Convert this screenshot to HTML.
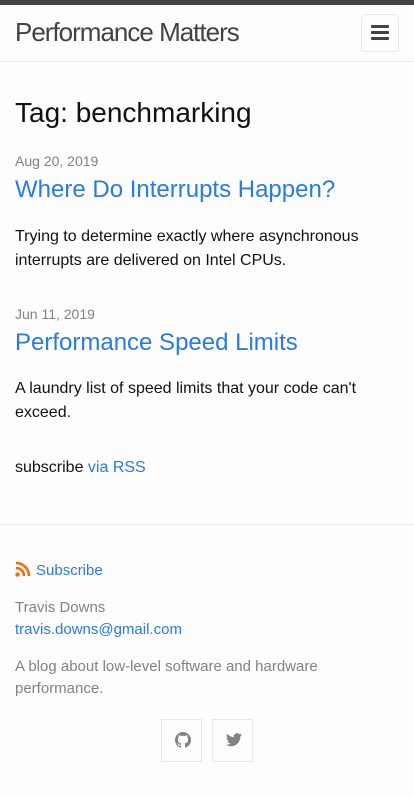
<!DOCTYPE html>
<html><head><meta charset="utf-8"><style>
body{margin:0;background:#fdfdfd;font-family:"Liberation Sans",sans-serif;color:#111;width:414px;height:797px;overflow:hidden;position:relative}
.a{position:absolute;white-space:nowrap}
a{color:#2a7ae2;text-decoration:none}
</style></head><body>
<div class="a" style="left:0;top:0;width:414px;height:5px;background:#424242"></div>
<div class="a" style="left:15px;top:17px;font-size:26px;color:#424242;letter-spacing:-1px">Performance Matters</div>
<div class="a" style="left:361px;top:14px;width:36px;height:36px;border:1px solid #e8e8e8;border-radius:4px;background:#fdfdfd"></div>
<div class="a" style="left:371px;top:25px;width:18px;height:3px;background:#424242;border-radius:1px"></div>
<div class="a" style="left:371px;top:31px;width:18px;height:3px;background:#424242;border-radius:1px"></div>
<div class="a" style="left:371px;top:37px;width:18px;height:3px;background:#424242;border-radius:1px"></div>
<div class="a" style="left:0;top:61px;width:414px;height:1px;background:#e8e8e8"></div>
<div class="a" style="left:15px;top:97px;font-size:28px">Tag: benchmarking</div>
<div class="a" style="left:15px;top:153px;font-size:14px;color:#828282">Aug 20, 2019</div>
<div class="a" style="left:15px;top:176px;font-size:24px"><a>Where Do Interrupts Happen?</a></div>
<div class="a" style="left:15px;top:225px;font-size:16px;line-height:24px;white-space:normal;width:380px">Trying to determine exactly where asynchronous interrupts are delivered on Intel CPUs.</div>
<div class="a" style="left:15px;top:306px;font-size:14px;color:#828282">Jun 11, 2019</div>
<div class="a" style="left:15px;top:329px;font-size:24px"><a>Performance Speed Limits</a></div>
<div class="a" style="left:15px;top:377px;font-size:16px;line-height:24px;white-space:normal;width:380px">A laundry list of speed limits that your code can't exceed.</div>
<div class="a" style="left:15px;top:459px;font-size:16px">subscribe <a>via RSS</a></div>
<div class="a" style="left:0;top:524px;width:414px;height:1px;background:#e8e8e8"></div>
<svg class="a" style="left:15px;top:561px" width="16" height="16" viewBox="0 0 16 16"><circle cx="2.5" cy="13.5" r="2.2" fill="#f26c0d"/><path d="M1 7a8 8 0 0 1 8 8M1 2a13 13 0 0 1 13 13" stroke="#f26c0d" stroke-width="2.6" fill="none"/></svg>
<div class="a" style="left:36px;top:562px;font-size:15px"><a>Subscribe</a></div>
<div class="a" style="left:15px;top:599px;font-size:15px;color:#828282">Travis Downs</div>
<div class="a" style="left:15px;top:621px;font-size:15px"><a>travis.downs@gmail.com</a></div>
<div class="a" style="left:15px;top:656px;font-size:15px;line-height:22px;color:#828282;white-space:normal;width:380px">A blog about low-level software and hardware performance.</div>
<div class="a" style="left:161px;top:719px;width:39px;height:41px;border:1px solid #e8e8e8"></div>
<div class="a" style="left:212px;top:719px;width:39px;height:41px;border:1px solid #e8e8e8"></div>
<svg class="a" style="left:175px;top:732px" width="16" height="16" viewBox="0 0 16 16"><path fill="#828282" d="M8 0C3.6 0 0 3.6 0 8c0 3.5 2.3 6.5 5.5 7.6.4.1.5-.2.5-.4v-1.4c-2.2.5-2.7-1-2.7-1-.4-.9-.9-1.2-.9-1.200-.7-.5.1-.5.1-.5.8.1 1.2.8 1.2.8.7 1.2 1.9.9 2.3.7.1-.5.3-.9.5-1.1-1.8-.2-3.600-.9-3.6-4 0-.9.3-1.6.8-2.1-.1-.2-.4-1 .1-2.1 0 0 .7-.2 2.2.8.6-.2 1.3-.3 2-.3s1.4.1 2 .3c1.5-1 2.2-.8 2.2-.8.4 1.1.2 1.9.1 2.1.5.6.8 1.3.8 2.1 0 3.1-1.9 3.7-3.6 3.9.3.3.5.8.5 1.5v2.2c0 .2.1.5.6.4C13.7 14.5 16 11.5 16 8c0-4.4-3.6-8-8-8z"/></svg>
<svg class="a" style="left:226px;top:733px" width="16" height="14" viewBox="0 0 16 14"><path fill="#828282" d="M16 1.7c-.6.3-1.2.4-1.9.5.7-.4 1.2-1 1.4-1.8-.6.4-1.3.6-2.1.8A3.3 3.3 0 0 0 7.8 4.2 9.3 9.3 0 0 1 1.1.8a3.3 3.3 0 0 0 1 4.4c-.5 0-1-.2-1.5-.4 0 1.6 1.1 2.9 2.6 3.2-.5.1-1 .2-1.5.1.4 1.3 1.600 2.3 3.1 2.3A6.6 6.6 0 0 1 0 11.7 9.3 9.3 0 0 0 5 13.2c6 0 9.3-5 9.3-9.3v-.4c.7-.5 1.2-1.1 1.7-1.8z"/></svg>
</body></html>
